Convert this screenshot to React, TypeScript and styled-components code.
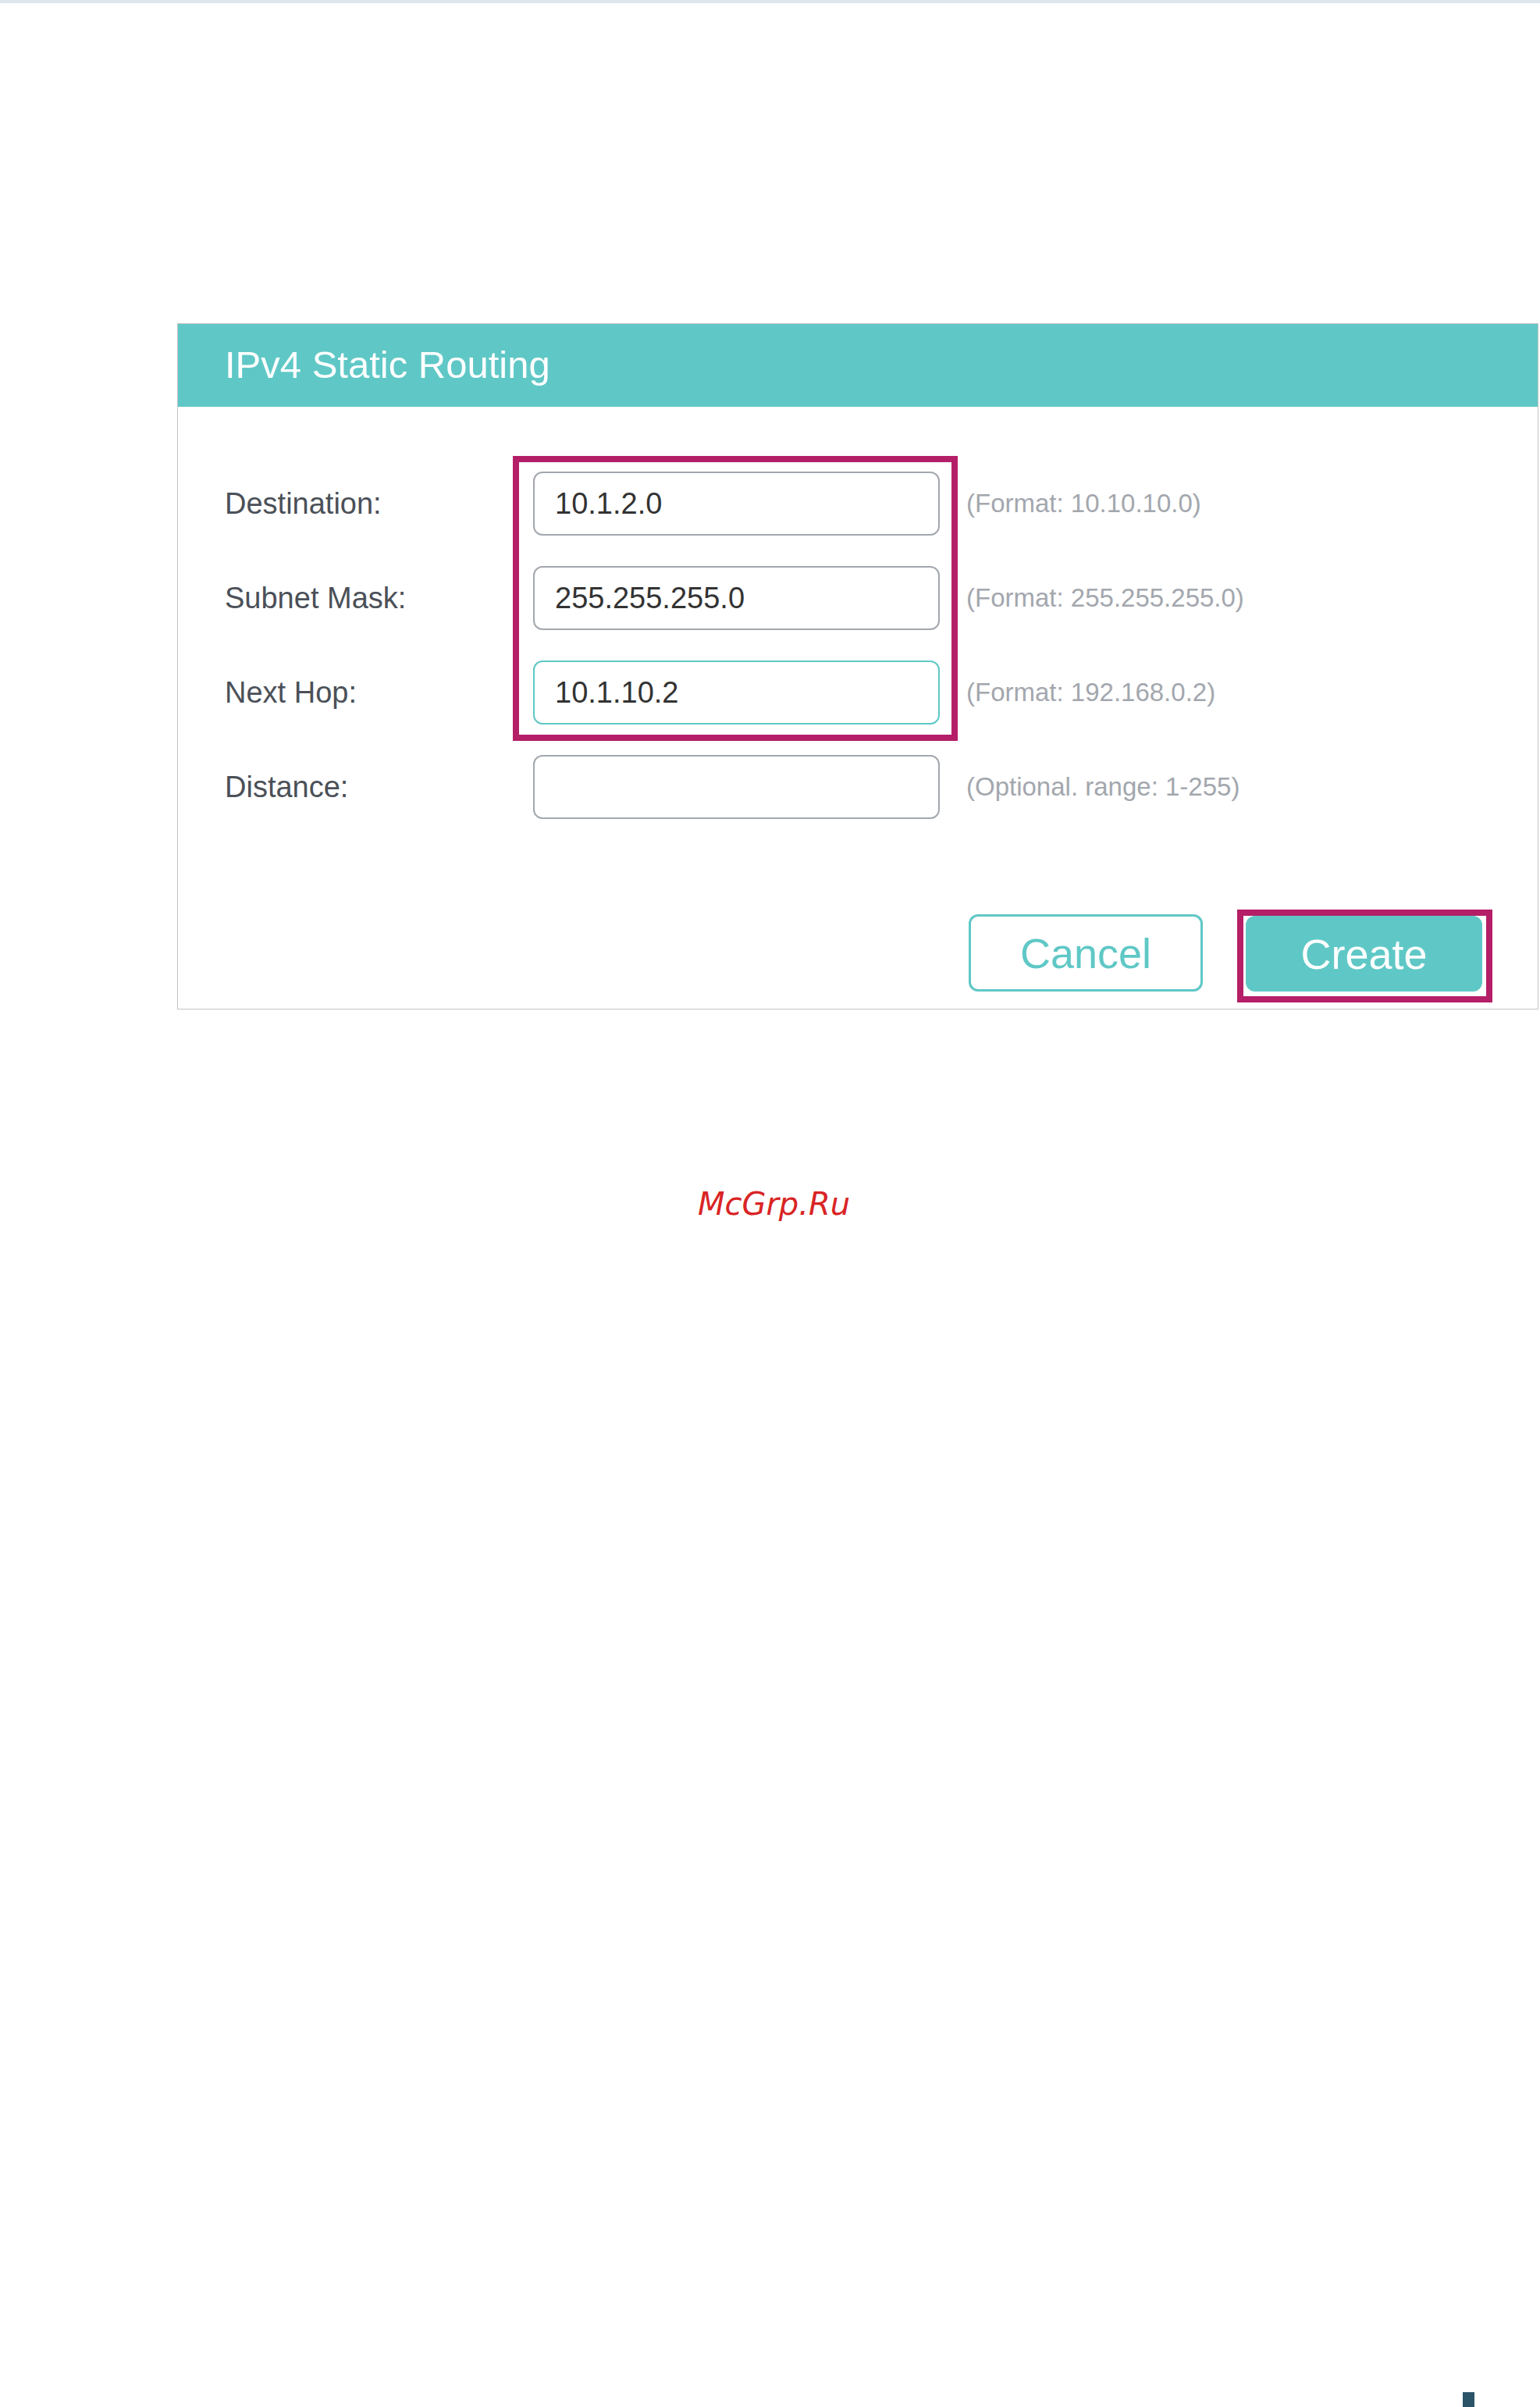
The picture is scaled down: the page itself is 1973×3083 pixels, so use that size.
import styled, { createGlobalStyle } from 'styled-components'

const GlobalStyle = createGlobalStyle`
  html, body {
    margin: 0;
    padding: 0;
    background: #ffffff;
  }
  * {
    box-sizing: border-box;
  }
`

const fields = [
  { label: 'Destination:', value: '10.1.2.0', hint: '(Format: 10.10.10.0)' },
  { label: 'Subnet Mask:', value: '255.255.255.0', hint: '(Format: 255.255.255.0)' },
  { label: 'Next Hop:', value: '10.1.10.2', hint: '(Format: 192.168.0.2)', active: true },
  { label: 'Distance:', value: '', hint: '(Optional. range: 1-255)' },
]

const App = () => {
  return (
    <Page>
      <GlobalStyle />
      <TopRule />
      <Panel>
        <Header>
          <Title>IPv4 Static Routing</Title>
        </Header>
        <Form>
          {fields.map((f, i) => (
            <Row key={f.label}>
              <Label $row={i + 1}>{f.label}</Label>
              <Field $row={i + 1} defaultValue={f.value} $active={f.active} readOnly />
              <Hint $row={i + 1}>{f.hint}</Hint>
            </Row>
          ))}
          <Highlight />
        </Form>
        <Actions>
          <CancelButton>Cancel</CancelButton>
          <Frame>
            <CreateButton>Create</CreateButton>
          </Frame>
        </Actions>
      </Panel>
      <Watermark>McGrp.Ru</Watermark>
      <PageMark />
    </Page>
  )
}

export default App

const Page = styled.div`
  width: 1973px;
  height: 3083px;
  overflow: hidden;
  display: flex;
  flex-direction: column;
  background: #ffffff;
  font-family: 'Liberation Sans', Arial, sans-serif;
`

const TopRule = styled.div`
  height: 4px;
  background-color: #dce6ec;
`

const Panel = styled.div`
  margin-top: 410px;
  margin-left: 227px;
  width: 1744px;
  border: 1px solid #c4c4c4;
  display: flex;
  flex-direction: column;
`

const Header = styled.div`
  height: 106px;
  background-color: #5fc8c6;
  display: flex;
  align-items: center;
  padding-left: 60px;
`

const Title = styled.div`
  color: #ffffff;
  font-size: 49px;
  margin-top: -3px;
`

const Form = styled.div`
  display: grid;
  grid-template-columns: 361px 521px auto;
  grid-auto-rows: 82px;
  row-gap: 39px;
  column-gap: 34px;
  padding: 83px 0 0 60px;
`

const Row = styled.div`
  display: contents;
`

const Highlight = styled.div`
  grid-column: 2;
  grid-row: 1 / 4;
  margin: -20px -23px -21px -26px;
  border: 8px solid #b41f68;
  pointer-events: none;
  z-index: 1;
`

const Label = styled.div<{ $row: number }>`
  grid-column: 1;
  grid-row: ${(p) => p.$row};
  align-self: center;
  font-size: 38px;
  color: #4b5058;
`

const Field = styled.input<{ $row: number; $active?: boolean }>`
  grid-column: 2;
  grid-row: ${(p) => p.$row};
  width: 100%;
  height: 82px;
  border: 2px solid ${(p) => (p.$active ? '#5fc8c6' : '#a3a7ae')};
  border-radius: 12px;
  padding: 0 0 0 26px;
  font-family: 'Liberation Sans', Arial, sans-serif;
  font-size: 38px;
  color: #333333;
  background: #ffffff;
  outline: none;
`

const Hint = styled.div<{ $row: number }>`
  grid-column: 3;
  grid-row: ${(p) => p.$row};
  align-self: center;
  font-size: 33px;
  color: #a3a7ae;
`

const Actions = styled.div`
  display: flex;
  justify-content: flex-end;
  align-items: flex-start;
  gap: 44px;
  padding: 116px 58px 8px 0;
`

const CancelButton = styled.div`
  margin-top: 6px;
  width: 300px;
  height: 99px;
  border: 3px solid #5fc8c6;
  border-radius: 12px;
  background: #ffffff;
  color: #5fc8c6;
  font-size: 54px;
  display: flex;
  align-items: center;
  justify-content: center;
`

const Frame = styled.div`
  border: 8px solid #b41f68;
  padding: 0 5px 6px 3px;
`

const CreateButton = styled.div`
  width: 303px;
  height: 97px;
  border-radius: 12px;
  background: #5fc8c6;
  color: #ffffff;
  font-size: 54px;
  display: flex;
  align-items: center;
  justify-content: center;
`

const Watermark = styled.div`
  margin-top: 225px;
  padding-left: 10px;
  text-align: center;
  font-family: 'DejaVu Sans', sans-serif;
  font-style: italic;
  font-size: 40px;
  line-height: 48px;
  color: #d92424;
`

const PageMark = styled.div`
  margin-top: auto;
  align-self: flex-end;
  margin-right: 84px;
  width: 15px;
  height: 19px;
  background-color: #2b5468;
`
